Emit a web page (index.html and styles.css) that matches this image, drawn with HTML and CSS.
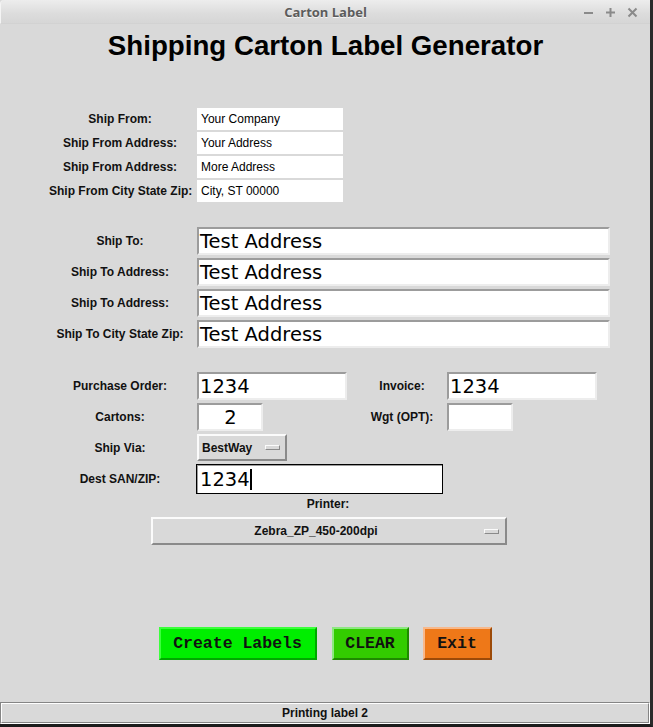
FILE: index.html
```html
<!DOCTYPE html>
<html lang="en">
<head>
<meta charset="utf-8">
<title>Carton Label</title>
<link rel="stylesheet" href="styles.css">
</head>
<body>
<div class="window">
  <header class="titlebar">
    <span class="spacer"></span>
    <span class="title">Carton Label</span>
    <div class="controls">
      <svg class="ctl" width="11" height="11" viewBox="0 0 11 11"><path d="M1 6h9" stroke="#8a8a8a" stroke-width="2"/></svg>
      <svg class="ctl" width="11" height="11" viewBox="0 0 11 11"><path d="M1 5.5h9M5.5 1v9" stroke="#8a8a8a" stroke-width="2"/></svg>
      <svg class="ctl" width="11" height="11" viewBox="0 0 11 11"><path d="M1.5 1.5l8 8M9.5 1.5l-8 8" stroke="#8a8a8a" stroke-width="2"/></svg>
    </div>
  </header>

  <main class="content">
    <h1 class="heading">Shipping Carton Label Generator</h1>

    <section class="from-grid">
      <label class="lbl">Ship From:</label>
      <div class="flat-entry">Your Company</div>
      <label class="lbl">Ship From Address:</label>
      <div class="flat-entry">Your Address</div>
      <label class="lbl">Ship From Address:</label>
      <div class="flat-entry">More Address</div>
      <label class="lbl">Ship From City State Zip:</label>
      <div class="flat-entry">City, ST 00000</div>
    </section>

    <section class="to-grid">
      <label class="lbl">Ship To:</label>
      <div class="entry">Test Address</div>
      <label class="lbl">Ship To Address:</label>
      <div class="entry">Test Address</div>
      <label class="lbl">Ship To Address:</label>
      <div class="entry">Test Address</div>
      <label class="lbl">Ship To City State Zip:</label>
      <div class="entry">Test Address</div>
    </section>

    <section class="order-grid">
      <label class="lbl lbl-left">Purchase Order:</label>
      <div class="entry entry-po">1234</div>
      <label class="lbl">Invoice:</label>
      <div class="entry entry-po">1234</div>

      <label class="lbl lbl-left">Cartons:</label>
      <div class="entry entry-small entry-center">2</div>
      <label class="lbl">Wgt (OPT):</label>
      <div class="entry entry-small"></div>

      <label class="lbl lbl-left">Ship Via:</label>
      <div class="menubutton menubutton-via"><span class="mb-text">BestWay</span><span class="indicator"></span></div>
      <span></span>
      <span></span>

      <label class="lbl lbl-left">Dest SAN/ZIP:</label>
      <div class="entry entry-dest">1234<span class="caret"></span></div>
    </section>

    <section class="printer">
      <label class="lbl printer-lbl">Printer:</label>
      <div class="menubutton menubutton-printer"><span class="mb-text mb-center">Zebra_ZP_450-200dpi</span><span class="indicator"></span></div>
    </section>

    <section class="actions">
      <button class="btn btn-create">Create Labels</button>
      <button class="btn btn-clear">CLEAR</button>
      <button class="btn btn-exit">Exit</button>
    </section>
  </main>

  <footer class="status"><div class="status-inner">Printing label 2</div></footer>
</div>
</body>
</html>
```

FILE: styles.css
```css
* { box-sizing: border-box; }

html, body {
  margin: 0;
  padding: 0;
  background: #d9d9d9;
}

.window {
  width: 653px;
  height: 727px;
  display: flex;
  flex-direction: column;
  background: #d9d9d9;
  border-right: 3px solid #2a2a2a;
  border-bottom: 3px solid #1c1c1c;
  font-family: "Liberation Sans", Arial, sans-serif;
  color: #000;
}

.titlebar {
  height: 24px;
  flex: none;
  display: grid;
  grid-template-columns: 1fr auto 1fr;
  align-items: center;
  background: linear-gradient(#ededed, #dcdcdc 60%, #d6d6d6);
  border-top-left-radius: 4px;
  border-left: 1px solid #f4f4f4;
  border-bottom: 1px solid #d2d2d2;
}

.title {
  font-family: "Open Sans", "Noto Sans", sans-serif;
  font-weight: 700;
  font-size: 13px;
  color: #5c5c5c;
  text-shadow: 0 1px 0 #f6f6f6;
  padding-top: 1px;
}

.controls {
  justify-self: end;
  display: flex;
  align-items: center;
  gap: 11px;
  padding-right: 12px;
  padding-top: 1px;
}

.ctl { display: block; }

.content {
  flex: 1;
  display: flex;
  flex-direction: column;
}

.heading {
  margin: 6px 0 0 0;
  height: 32px;
  line-height: 32px;
  text-align: center;
  font-family: "Liberation Sans", Arial, sans-serif;
  font-weight: 700;
  font-size: 27.7px;
  padding-left: 1px;
}

.lbl {
  font-family: "Liberation Sans", Arial, sans-serif;
  font-weight: 700;
  font-size: 12px;
  color: #111;
  text-align: center;
  align-self: center;
  white-space: nowrap;
}

.from-grid {
  margin-top: 46px;
  padding-left: 49px;
  display: grid;
  grid-template-columns: 142px 146px;
  grid-auto-rows: 22px;
  column-gap: 6px;
  row-gap: 2px;
}

.flat-entry {
  background: #fff;
  font-size: 12px;
  line-height: 22px;
  padding-left: 4px;
  color: #000;
}

.to-grid {
  margin-top: 25px;
  padding-left: 49px;
  display: grid;
  grid-template-columns: 142px 413px;
  grid-auto-rows: 28px;
  column-gap: 6px;
  row-gap: 3px;
}

.entry {
  background: #fff;
  border-style: solid;
  border-width: 2px;
  border-color: #9c9c9c #ededed #ededed #9c9c9c;
  font-family: "DejaVu Sans", sans-serif;
  font-size: 19.5px;
  line-height: 26px;
  padding-left: 1px;
  color: #000;
  white-space: nowrap;
}

.order-grid {
  margin-top: 24px;
  padding-left: 49px;
  display: grid;
  grid-template-columns: 148px 160px 90px 150px;
  grid-template-rows: 28px 28px 27px 30px;
  row-gap: 3px;
}

.lbl-left { padding-right: 6px; }

.entry-po { width: 150px; }
.entry-small { width: 66px; }
.entry-center { text-align: center; }

.entry-dest {
  grid-column: 2 / 4;
  width: 247px;
  margin-left: -1px;
  border-width: 1px;
  border-color: #000;
  box-shadow: inset 1px 1px 0 #9c9c9c;
  line-height: 28px;
  padding-left: 3px;
  padding-top: 1px;
  display: flex;
  align-items: center;
}

.caret {
  display: inline-block;
  width: 2px;
  height: 21px;
  background: #000;
}

.menubutton {
  display: flex;
  align-items: center;
  background: #d9d9d9;
  border-style: solid;
  border-width: 2px;
  border-color: #fbfbfb #8a8a8a #8a8a8a #fbfbfb;
  font-family: "Liberation Sans", Arial, sans-serif;
  font-weight: 700;
  font-size: 12px;
  color: #111;
}

.menubutton-via {
  width: 90px;
  height: 27px;
  padding-left: 3px;
}

.menubutton-via .indicator { margin-left: 13px; }

.indicator {
  width: 15px;
  height: 5px;
  flex: none;
  background: #d9d9d9;
  border-style: solid;
  border-width: 1px;
  border-color: #fbfbfb #8a8a8a #8a8a8a #fbfbfb;
}

.printer {
  margin-top: 3px;
  display: flex;
  flex-direction: column;
  align-items: center;
  padding-left: 8px;
}

.printer-lbl {
  line-height: 14px;
  height: 14px;
  margin-right: 2px;
}

.menubutton-printer {
  margin-top: 6px;
  width: 356px;
  height: 28px;
  padding-right: 6px;
}

.mb-center {
  flex: 1;
  text-align: center;
}

.menubutton-printer .indicator { margin-left: 5px; }

.actions {
  margin-top: 82px;
  display: flex;
  justify-content: center;
  gap: 15px;
}

.btn {
  height: 33px;
  padding: 0;
  font-family: "Liberation Mono", "Courier New", monospace;
  font-weight: 700;
  font-size: 16.5px;
  color: #111;
  border-style: solid;
  border-width: 2px;
  cursor: pointer;
}

.btn-create {
  width: 158px;
  background: #00ee00;
  border-color: #3cff3c #00a800 #00a800 #3cff3c;
}

.btn-clear {
  width: 77px;
  background: #33cc00;
  border-color: #8de880 #1f8a00 #1f8a00 #8de880;
}

.btn-exit {
  width: 69px;
  margin-left: -1px;
  background: #ee7818;
  border-color: #f8b88a #9c4a08 #9c4a08 #f8b88a;
}

.status {
  height: 22px;
  flex: none;
  border-style: solid;
  border-width: 1px;
  border-color: #858585 #ffffff #ffffff #858585;
}

.status-inner {
  height: 20px;
  border-style: solid;
  border-width: 1px;
  border-color: #ffffff #858585 #858585 #ffffff;
  text-align: center;
  font-weight: 700;
  font-size: 12px;
  line-height: 18px;
  color: #111;
}
```
